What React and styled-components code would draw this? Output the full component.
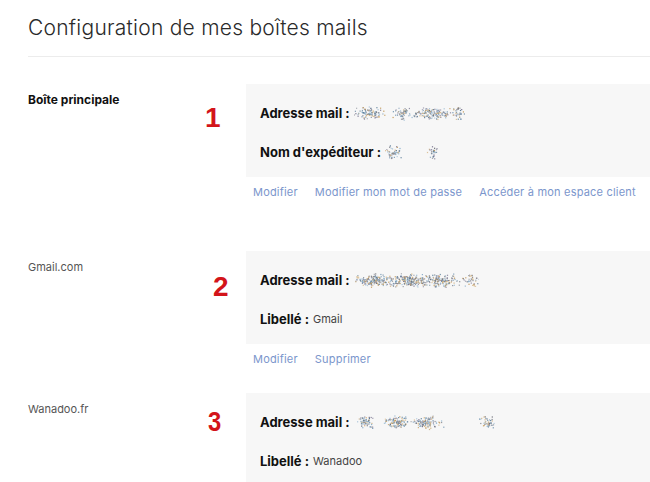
import React from "react";
import styled, { createGlobalStyle } from "styled-components";

const Global = createGlobalStyle`
  html, body { margin: 0; padding: 0; background: #fff; }
  body { font-family: Inter, "Open Sans", sans-serif; color: #222; }
`;

const Page = styled.div`
  width: 650px;
  height: 482px;
  overflow: hidden;
  padding-left: 28px;
  box-sizing: border-box;
`;

const Header = styled.h1`
  margin: 0;
  padding: 13px 0 13px;
  font-size: 21px;
  line-height: 30px;
  font-weight: 300;
  color: #2a2a2a;
  border-bottom: 1px solid #ececec;
  letter-spacing: 0.25px;
`;

const Section = styled.section`
  position: relative;
  display: grid;
  grid-template-columns: 218px 1fr;
  margin-top: ${(p) => p.$top}px;
`;

const SideLabel = styled.div`
  padding-top: 8px;
  font-size: ${(p) => (p.$main ? 12 : 11)}px;
  line-height: 16px;
  font-weight: ${(p) => (p.$main ? 700 : 400)};
  color: ${(p) => (p.$main ? "#111" : "#555")};
`;

const Annotation = styled.span`
  position: absolute;
  left: ${(p) => p.$x}px;
  top: ${(p) => p.$y}px;
  font-family: "Liberation Sans", Arial, sans-serif;
  font-weight: 700;
  font-size: 28px;
  line-height: 28px;
  color: #d3141a;
  transform: scaleX(${(p) => p.$sx || 1});
  transform-origin: left top;
`;

const Main = styled.div`
  display: flex;
  flex-direction: column;
`;

const Card = styled.div`
  background: #f7f7f7;
  padding: 19px 14px 15px;
  display: flex;
  flex-direction: column;
  gap: 19px;
`;

const Row = styled.div`
  display: flex;
  align-items: center;
  height: 20px;
  font-size: 13px;
  white-space: nowrap;
`;

const Key = styled.span`
  font-weight: 700;
  color: #111;
`;

const Value = styled.span`
  font-size: 11px;
  color: #444;
  margin-left: 4px;
`;

const Links = styled.div`
  display: flex;
  gap: 17px;
  padding: 5px 7px 0;
  height: 20px;
  align-items: center;
`;

const Link = styled.a`
  font-size: 11px;
  color: #7b96cc;
  text-decoration: none;
  white-space: nowrap;
  letter-spacing: 0.2px;
`;

function rng(seed) {
  let s = seed >>> 0;
  return () => {
    s = (s * 1664525 + 1013904223) >>> 0;
    return s / 4294967296;
  };
}

const palette = ["#6f93b0", "#5a7d98", "#c39a5a", "#8a8f98", "#9cbcd4", "#6b6d76", "#d2ad74", "#88aecb", "#7a7590"];

function Noise({ width, seed, clusters }) {
  const r = rng(seed);
  const dots = [];
  clusters.forEach(([cx, w, dens]) => {
    const n = Math.round(w * dens);
    for (let i = 0; i < n; i++) {
      const x = cx + (r() + r() + r() - 1.5) * w * 0.6;
      const y = 9 + (r() + r() - 1) * 7;
      dots.push(
        <rect
          key={dots.length}
          x={x.toFixed(1)}
          y={y.toFixed(1)}
          width="1.2"
          height="1.2"
          fill={palette[Math.floor(r() * palette.length)]}
          opacity={0.6 + r() * 0.4}
        />
      );
    }
  });
  return (
    <svg width={width} height="18" viewBox={`0 0 ${width} 18`} style={{ display: "block", marginLeft: 4 }}>
      {dots}
    </svg>
  );
}

const sections = [
  {
    top: 27,
    label: "Boîte principale",
    main: true,
    num: "1",
    nx: 177,
    ny: 20,
    rows: [
      { key: "Adresse mail :", noise: { width: 115, seed: 3, clusters: [[15, 22, 4.5], [48, 14, 4], [78, 28, 5], [104, 12, 3]] } },
      { key: "Nom d'expéditeur :", noise: { width: 60, seed: 7, clusters: [[8, 14, 3.5], [48, 8, 3.5]] } },
    ],
    links: ["Modifier", "Modifier mon mot de passe", "Accéder à mon espace client"],
  },
  {
    top: 49,
    label: "Gmail.com",
    num: "2",
    nx: 185,
    ny: 22,
    rows: [
      { key: "Adresse mail :", noise: { width: 125, seed: 11, clusters: [[18, 30, 6], [52, 30, 6.5], [86, 28, 5.5], [116, 12, 3]] } },
      { key: "Libellé :", value: "Gmail" },
    ],
    links: ["Modifier", "Supprimer"],
  },
  {
    top: 24,
    label: "Wanadoo.fr",
    num: "3",
    nx: 180,
    ny: 15,
    sx: 0.85,
    rows: [
      { key: "Adresse mail :", noise: { width: 145, seed: 19, clusters: [[12, 14, 4.5], [42, 18, 6], [72, 24, 4.5], [132, 10, 4.5]] } },
      { key: "Libellé :", value: "Wanadoo" },
    ],
  },
];

export default function App() {
  return (
    <Page>
      <Global />
      <Header>Configuration de mes boîtes mails</Header>
      {sections.map((s) => (
        <Section key={s.num} $top={s.top}>
          <SideLabel $main={s.main}>{s.label}</SideLabel>
          <Annotation $x={s.nx} $y={s.ny} $sx={s.sx}>{s.num}</Annotation>
          <Main>
            <Card>
              {s.rows.map((r) => (
                <Row key={r.key}>
                  <Key>{r.key}</Key>
                  {r.value && <Value>{r.value}</Value>}
                  {r.noise && <Noise {...r.noise} />}
                </Row>
              ))}
            </Card>
            {s.links && (
              <Links>
                {s.links.map((l) => (
                  <Link key={l} href="#">{l}</Link>
                ))}
              </Links>
            )}
          </Main>
        </Section>
      ))}
    </Page>
  );
}
